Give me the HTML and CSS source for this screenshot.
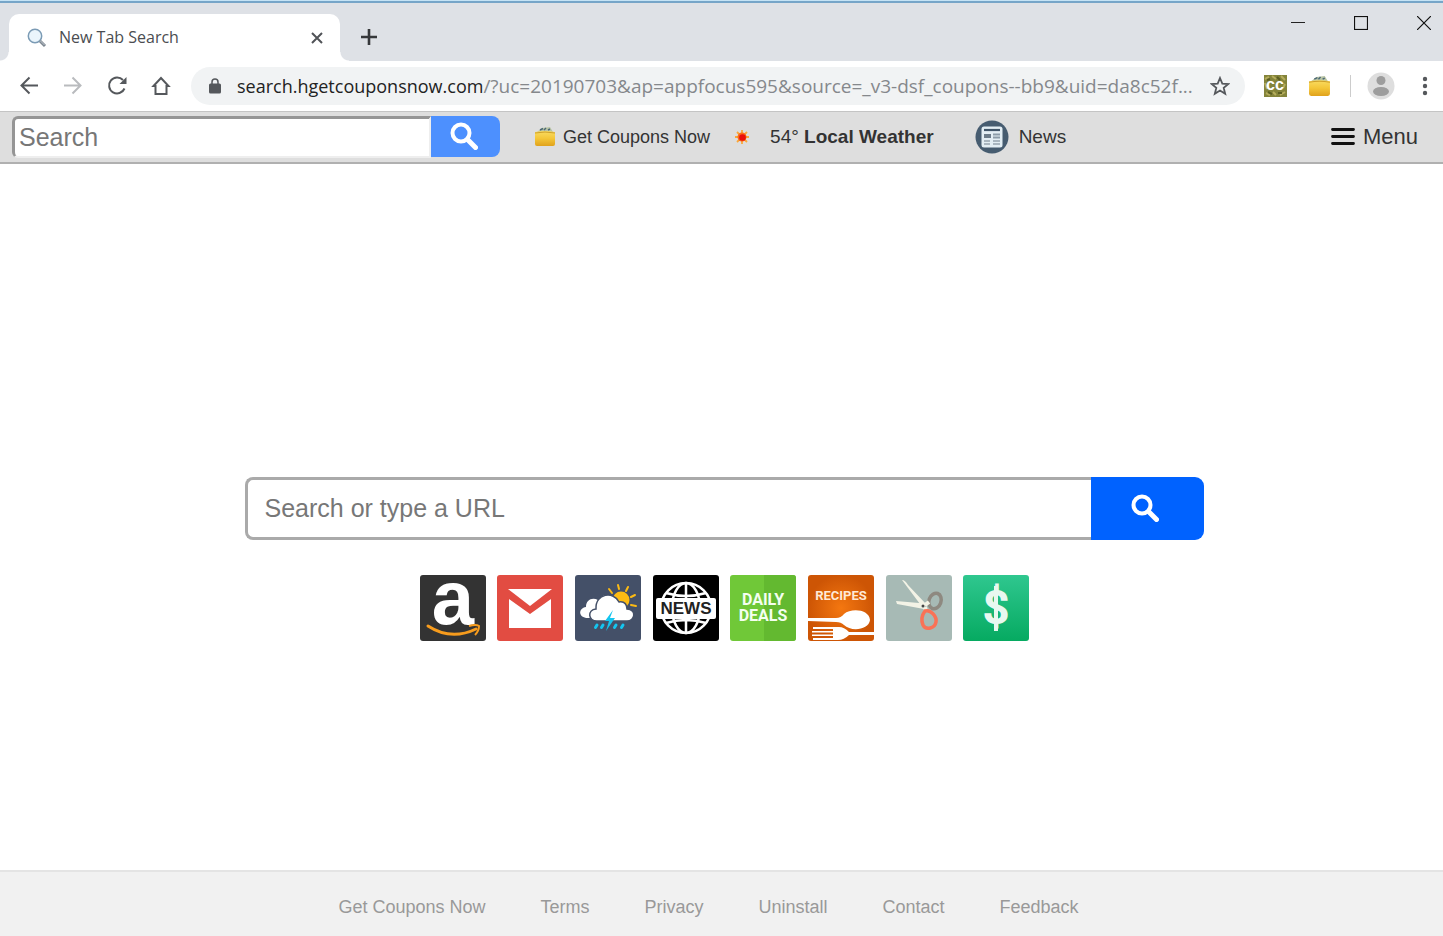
FILE: index.html
```html
<!DOCTYPE html>
<html lang="en">
  <head>
    <meta charset="UTF-8" />
    <meta name="viewport" content="width=device-width, initial-scale=1.0" />
    <title>New Tab Search</title>
    <link rel="stylesheet" href="styles.css">
  </head>
  <body>
    <svg class="defs" width="0" height="0">
      <defs>
        <linearGradient id="gold" x1="0" y1="0" x2="0" y2="1">
          <stop offset="0" stop-color="#f9dc62" />
          <stop offset="0.5" stop-color="#f4c638" />
          <stop offset="1" stop-color="#e0a21c" />
        </linearGradient>
        <symbol id="wallet" viewBox="0 0 22 22">
          <path d="M3 6 L8 2 L16 1 L19 6 Z" fill="#b9c4a5" />
          <path d="M6 4 L9 2.500 M10 4 L12 2 M14 4 L16 3" stroke="#4b6875" stroke-width="1.400" />
          <path d="M1 6 Q11 4 21 6 L21 18 Q21 20 19 20 L3 20 Q1 20 1 18 Z" fill="url(#gold)" />
          <path d="M1 7 Q11 5 21 7" fill="none" stroke="#cfa02b" />
        </symbol>
        <symbol id="glass" viewBox="0 0 28 28">
          <circle cx="11" cy="11" r="8.500" fill="none" stroke="currentColor" stroke-width="4" />
          <path d="M17.500 17.500 L25.500 25.500" stroke="currentColor" stroke-width="5" stroke-linecap="round" />
        </symbol>
      </defs>
    </svg>

    <header class="browser">
      <div class="tab-strip">
        <div class="tab">
          <svg width="20" height="20" viewBox="0 0 20 20">
            <circle cx="8" cy="8" r="6.700" fill="#eaf5fc" stroke="#7b9bb5" stroke-width="1.500" />
            <path d="M13 13 L18 18" stroke="#7d8791" stroke-width="3" />
            <path d="M13.500 13 L17.500 17" stroke="#c3cad1" stroke-width="1" />
          </svg>
          <span class="tab-title">New Tab Search</span>
          <button class="icon-btn" aria-label="Close tab">
            <svg width="12" height="12" viewBox="0 0 12 12"><path d="M1 1 L11 11 M11 1 L1 11" stroke="#505357" stroke-width="2" /></svg>
          </button>
        </div>
        <button class="icon-btn new-tab" aria-label="New tab">
          <svg width="18" height="18" viewBox="0 0 18 18"><path d="M9 1 V17 M1 9 H17" stroke="#36383b" stroke-width="2.600" /></svg>
        </button>
        <div class="window-controls">
          <button class="icon-btn" aria-label="Minimize">
            <svg width="14" height="14" viewBox="0 0 14 14"><path d="M0 6.500 H14" stroke="#222" /></svg>
          </button>
          <button class="icon-btn" aria-label="Maximize">
            <svg width="14" height="14" viewBox="0 0 14 14"><rect x="0.500" y="0.500" width="13" height="13" fill="none" stroke="#111" stroke-width="1.200" /></svg>
          </button>
          <button class="icon-btn" aria-label="Close">
            <svg width="14" height="14" viewBox="0 0 14 14"><path d="M0 0 L14 14 M14 0 L0 14" stroke="#111" stroke-width="1.200" /></svg>
          </button>
        </div>
      </div>

      <div class="nav-row">
        <nav class="nav-buttons">
          <button class="icon-btn" aria-label="Back">
            <svg width="20" height="20" viewBox="0 0 20 20"><path d="M19 9.500 H3 M10.500 1.500 L2.500 9.500 L10.500 17.500" fill="none" stroke="#55585c" stroke-width="2" /></svg>
          </button>
          <button class="icon-btn" aria-label="Forward">
            <svg width="20" height="20" viewBox="0 0 20 20"><path d="M1 9.500 H17 M9.500 1.500 L17.500 9.500 L9.500 17.500" fill="none" stroke="#b9bbbe" stroke-width="2" /></svg>
          </button>
          <button class="icon-btn" aria-label="Reload">
            <svg width="20" height="20" viewBox="0 0 20 20"><path d="M17.500 12.500 A8 8 0 1 1 16 4" fill="none" stroke="#55585c" stroke-width="2" /><path d="M19.500 1 V8 H12.500 Z" fill="#55585c" /></svg>
          </button>
          <button class="icon-btn" aria-label="Home">
            <svg width="20" height="20" viewBox="0 0 20 20"><path d="M2.500 10 L10 2 L17.500 10 H15.500 V18 H4.500 V10 Z" fill="none" stroke="#55585c" stroke-width="2" /></svg>
          </button>
        </nav>
        <div class="address">
          <svg width="12" height="16" viewBox="0 0 12 16"><rect y="5.500" width="12" height="10" rx="1.500" fill="#55585c" /><path d="M3 6 V4 A3 3 0 0 1 9 4 V6" fill="none" stroke="#55585c" stroke-width="1.500" /></svg>
          <div class="url" role="textbox" aria-label="Address"><span>search.hgetcouponsnow.com</span>/?uc=20190703&amp;ap=appfocus595&amp;source=_v3-dsf_coupons--bb9&amp;uid=da8c52f...</div>
          <button class="icon-btn" aria-label="Bookmark">
            <svg width="20" height="20" viewBox="0 0 20 20"><path d="M10 2 L12.300 7.600 L18.400 8 L13.700 11.900 L15.200 17.800 L10 14.600 L4.800 17.800 L6.300 11.900 L1.600 8 L7.700 7.600 Z" fill="none" stroke="#55585c" stroke-width="1.800" /></svg>
          </button>
        </div>
        <div class="extensions">
          <button class="icon-btn" aria-label="CC extension">
            <svg width="24" height="24" viewBox="0 0 24 24"><rect x="1" y="1" width="23" height="22" fill="#84843a" /><path d="M2 5 L6 3 M9 2 L13 5 M18 2 L22 6 M3 19 L7 21 M10 18 L13 21 M17 21 L22 18 M2 9 L4 15 M22 10 L20 14" stroke="#b5ad5d" stroke-width="2" /><path d="M4 6 L7 5 M14 3 L17 6 M5 18 L9 20 M15 19 L19 19" stroke="#5b5e22" stroke-width="2" /><text x="12" y="16" text-anchor="middle" class="cc-text">cc</text></svg>
          </button>
          <button class="icon-btn" aria-label="Get Coupons Now extension">
            <svg width="23" height="23"><use href="#wallet" /></svg>
          </button>
          <span class="divider"></span>
          <button class="icon-btn" aria-label="Profile">
            <svg width="28" height="28" viewBox="0 0 28 28"><circle cx="14" cy="14" r="13.500" fill="#dedede" /><circle cx="14" cy="8.500" r="4.500" fill="#9d9d9d" /><ellipse cx="14" cy="19.500" rx="8" ry="4.500" fill="#9d9d9d" /></svg>
          </button>
          <button class="icon-btn more" aria-label="Chrome menu">
            <svg width="6" height="20" viewBox="0 0 6 20"><g fill="#55585c"><circle cx="3" cy="3" r="2.200" /><circle cx="3" cy="10" r="2.200" /><circle cx="3" cy="17" r="2.200" /></g></svg>
          </button>
        </div>
      </div>
    </header>

    <div class="toolbar">
      <form class="bar-search">
        <input type="text" placeholder="Search" aria-label="Search">
        <button type="button" aria-label="Search"><svg width="28" height="28"><use href="#glass" /></svg></button>
      </form>
      <a class="coupons" href="#"><svg width="22" height="22"><use href="#wallet" /></svg>Get Coupons Now</a>
      <a class="weather" href="#">
        <svg width="16" height="16" viewBox="0 0 16 16"><path d="M8 1 V15 M1 8 H15 M3 3 L13 13 M13 3 L3 13" stroke="#f9a83c" stroke-width="1.800" /><circle cx="8" cy="8" r="4.500" fill="#fb6a1b" /><circle cx="8.500" cy="8.500" r="3.300" fill="#e90f0c" /></svg>
        <span>54° <b>Local Weather</b></span>
      </a>
      <a class="news" href="#">
        <svg width="34" height="34" viewBox="0 0 34 34">
          <circle cx="17" cy="17" r="16.500" fill="#465c70" />
          <rect x="6.500" y="6.500" width="21" height="21" rx="2.500" fill="#e3eef4" />
          <path d="M9 10 H25" stroke="#3f5468" stroke-width="2.200" />
          <path d="M9 14 H16 V18 H9 Z" fill="#6c7c8a" />
          <path d="M18 14.500 H25 M18 17.500 H25" stroke="#8b9ba8" stroke-width="1.800" />
          <path d="M9 21 H15 M9 24 H15 M18 21 H25 M18 24 H25" stroke="#a9b6c0" stroke-width="1.800" />
        </svg>News
      </a>
      <button class="menu-btn">
        <svg width="24" height="18" viewBox="0 0 24 18"><path d="M1.500 1.500 H22.500 M1.500 8.500 H22.500 M1.500 15.500 H22.500" stroke="#111" stroke-width="2.800" stroke-linecap="round" /></svg>Menu
      </button>
    </div>

    <main>
      <form class="main-search">
        <input type="text" placeholder="Search or type a URL" aria-label="Search or type a URL">
        <button type="button" aria-label="Search"><svg width="28" height="28"><use href="#glass" /></svg></button>
      </form>

      <div class="tiles">
        <a href="#" aria-label="Amazon">
          <svg viewBox="0 0 66 66"><rect width="66" height="66" rx="3" fill="#333" /><text x="33" y="49" text-anchor="middle" class="amazon-a">a</text><path d="M8 51 Q31 66 56 54" fill="none" stroke="#f79c1d" stroke-width="3" stroke-linecap="round" /><path d="M49 51 Q56 49 59 51 Q59 56 55 60" fill="none" stroke="#f79c1d" stroke-width="2" /></svg>
        </a>
        <a href="#" aria-label="Gmail">
          <svg viewBox="0 0 66 66"><rect width="66" height="66" rx="3" fill="#e24c42" /><path d="M11 14 H55 L33 31 Z" fill="#fff" /><path d="M12 24 L33 39 L54 24 V53 H12 Z" fill="#fff" /></svg>
        </a>
        <a href="#" aria-label="Weather">
          <svg viewBox="0 0 66 66">
            <rect width="66" height="66" rx="3" fill="#445068" />
            <circle cx="46" cy="25" r="8.500" fill="#fdbb13" />
            <path d="M34 14 L37 18 M43 10 L44 14 M53 12 L51 16 M60 20 L56 22 M61 31 L56 30" stroke="#fdbb13" stroke-width="2" stroke-linecap="round" />
            <path d="M13 43 C3 43 3 33 11 32 C11 25 17 22 23 25 L24 43 Z" fill="#fff" />
            <path d="M22 46 C13 46 12 35 21 34 C20 18 39 16 44 27 C50 26 52 30 52 34 C62 35 60 46 52 46 Z" fill="#fff" stroke="#445068" stroke-width="1.500" />
            <path d="M38 35 L30 46 H34 L31 56 L40 43 H35 Z" fill="#14c5ef" />
            <path d="M22 50 L20.500 52.500 M28 50 L26.500 52.500 M41 50 L39.500 52.500 M48 50 L46.500 52.500" stroke="#14c5ef" stroke-width="3" stroke-linecap="round" />
          </svg>
        </a>
        <a href="#" aria-label="News">
          <svg viewBox="0 0 66 66">
            <rect width="66" height="66" rx="3" fill="#000" />
            <g fill="none" stroke="#fff" stroke-width="2.500"><circle cx="33" cy="33" r="25" /><ellipse cx="33" cy="33" rx="14" ry="25" /><path d="M33 8 V58 M13 18 Q33 24 53 18 M13 48 Q33 42 53 48" /></g>
            <rect x="3" y="23" width="60" height="21" rx="2" fill="#fff" />
            <text x="33" y="39" text-anchor="middle" class="globe-text">NEWS</text>
          </svg>
        </a>
        <a href="#" aria-label="Daily Deals">
          <svg viewBox="0 0 66 66"><rect width="66" height="66" rx="3" fill="#70c838" /><path d="M34 0 H63 Q66 0 66 3 V63 Q66 66 63 66 H34 Z" fill="#63b930" /><text x="33" y="30" text-anchor="middle" class="deals-text">DAILY</text><text x="33" y="46" text-anchor="middle" class="deals-text">DEALS</text></svg>
        </a>
        <a href="#" aria-label="Recipes">
          <svg viewBox="0 0 66 66">
            <defs><radialGradient id="orange"><stop offset="0" stop-color="#f47710" /><stop offset="1" stop-color="#cd5505" /></radialGradient></defs>
            <rect width="66" height="66" rx="3" fill="url(#orange)" />
            <text x="33" y="25" text-anchor="middle" class="recipes-text">RECIPES</text>
            <path d="M0 43 L28 43 Q33 43 36 39 C43 33 61 34 62 45 C61 55 43 57 36 50 Q33 47 28 47 L0 46 Z" fill="#fff" />
            <path d="M66 57 H41 Q36 52 31 52 H5 V54 H25 V56 H4 V57.500 H25 V59.500 H4 V61 H25 V63 H5 V65 H30 Q36 65 41 60 H66 Z" fill="#fff" />
          </svg>
        </a>
        <a href="#" aria-label="Coupons">
          <svg viewBox="0 0 66 66">
            <rect width="66" height="66" rx="3" fill="#a7bab5" />
            <ellipse cx="49" cy="26" rx="6" ry="8" transform="rotate(20 49 26)" fill="none" stroke="#8e8980" stroke-width="3.500" />
            <path d="M16 5 Q19 5 22 10 L40 29 L37 33 L34 29 Z M10 26 L33 28 L40 30 L38 34 L11 29 Z" fill="#f3f3e6" />
            <path d="M39 30 L43 27 M39 32 L40 36" stroke="#f3f3e6" stroke-width="4" />
            <path d="M39 36 C45 34 51 42 50 47 C49 53 40 56 37 50 C35 45 36 40 39 36 Z" fill="none" stroke="#fa7256" stroke-width="3.500" />
            <circle cx="37" cy="31" r="1.500" fill="#454545" />
          </svg>
        </a>
        <a href="#" aria-label="Money">
          <svg viewBox="0 0 66 66">
            <defs><linearGradient id="green" x1="0" y1="0" x2="0" y2="1"><stop offset="0" stop-color="#2fc78f" /><stop offset="1" stop-color="#06aa61" /></linearGradient></defs>
            <rect width="66" height="66" rx="3" fill="url(#green)" />
            <path d="M33 11 V56" stroke="#e8f8f0" stroke-width="4" />
            <text x="33" y="49" text-anchor="middle" class="dollar">$</text>
          </svg>
        </a>
      </div>
    </main>

    <footer>
      <a href="#">Get Coupons Now</a>
      <a href="#">Terms</a>
      <a href="#">Privacy</a>
      <a href="#">Uninstall</a>
      <a href="#">Contact</a>
      <a href="#">Feedback</a>
    </footer>
  </body>
</html>
```
FILE: styles.css
```css
* {
  box-sizing: border-box;
}
body {
  margin: 0;
  min-height: 100vh;
  display: flex;
  flex-direction: column;
  background: #fff;
  font-family: "Liberation Sans", Arial, sans-serif;
  color: #333;
}
a {
  color: inherit;
  text-decoration: none;
}
svg {
  display: block;
  flex: none;
}
button {
  font-family: inherit;
  border: 0;
  padding: 0;
  background: none;
  cursor: pointer;
}
.defs {
  position: absolute;
}

/* browser frame */
.browser {
  border-top: 1px solid #c5e3f5;
  font-family: "Open Sans", "Noto Sans", sans-serif;
}
.tab-strip {
  display: flex;
  align-items: flex-start;
  height: 60px;
  padding-left: 9px;
  border-top: 2px solid #76a5c8;
  background: #dee1e6;
}
.tab {
  position: relative;
  display: flex;
  align-items: center;
  width: 331px;
  height: 47px;
  margin-top: 11px;
  padding: 0 17px 0 18px;
  background: #fff;
  border-radius: 10px 10px 0 0;
}
/* curved feet of the tab */
.tab::before,
.tab::after {
  content: "";
  position: absolute;
  bottom: 0;
  width: 9px;
  height: 9px;
}
.tab::before {
  right: 100%;
  background: radial-gradient(circle at 0 0, transparent 8px, #fff 9px);
}
.tab::after {
  left: 100%;
  background: radial-gradient(circle at 100% 0, transparent 8px, #fff 9px);
}
.tab-title {
  flex: 1;
  margin-left: 12px;
  padding-bottom: 2px;
  font-size: 16px;
  color: #4a4d51;
}
.new-tab {
  margin: 25px 0 0 20px;
}
.window-controls {
  display: flex;
  gap: 49px;
  margin: 13px 12px 0 auto;
}
.nav-row {
  display: flex;
  align-items: center;
  height: 50px;
  background: #fff;
}
.nav-buttons {
  display: flex;
  gap: 24px;
  padding: 0 20px 0 19px;
}
.address {
  flex: 1;
  min-width: 0;
  display: flex;
  align-items: center;
  height: 38px;
  padding: 0 15px 0 18px;
  border-radius: 19px;
  background: #f1f3f4;
}
.url {
  flex: 1;
  min-width: 0;
  margin: 0 8px 0 16px;
  overflow: hidden;
  white-space: nowrap;
  font-size: 19px;
  color: #85888c;
}
.url span {
  font-size: 18px;
  color: #222;
}
.extensions {
  display: flex;
  align-items: center;
  padding: 0 15px 0 18px;
}
.extensions .icon-btn + .icon-btn {
  margin-left: 21px;
}
.extensions .icon-btn.more {
  margin-left: 27px;
}
.divider {
  width: 1px;
  height: 22px;
  margin: 0 16px 0 19px;
  background: #ccc;
}
.cc-text {
  font: bold 16px "Liberation Sans", sans-serif;
  fill: #fff;
}

/* page toolbar */
.toolbar {
  display: flex;
  align-items: center;
  height: 53px;
  padding: 0 25px 0 12px;
  border-top: 1px solid #c4c4c4;
  border-bottom: 2px solid #b0b0b0;
  background: #dedede;
  font-size: 19px;
}
.toolbar a {
  display: flex;
  align-items: center;
  white-space: nowrap;
}
.bar-search {
  display: flex;
  width: 488px;
  height: 42px;
}
.bar-search input {
  flex: 1;
  min-width: 0;
  padding: 0 4px;
  border: solid;
  border-width: 3px 2px 2px 3px;
  border-color: #959595 #eee #eee #959595;
  border-radius: 6px 0 0 6px;
  font: 25px "Liberation Sans", Arial, sans-serif;
}
.bar-search button {
  display: flex;
  justify-content: center;
  width: 69px;
  height: 41px;
  padding: 6px 3px 0 0;
  border-radius: 0 8px 8px 0;
  background: #4d90fe;
  color: #fff;
}
input::placeholder {
  color: #777;
}
.toolbar .coupons {
  gap: 7px;
  margin-left: 34px;
  font-size: 18px;
}
.toolbar .weather {
  gap: 20px;
  margin-left: 24px;
}
.toolbar .news {
  gap: 10px;
  margin-left: 41px;
}
.menu-btn {
  display: flex;
  align-items: center;
  gap: 8px;
  margin-left: auto;
  font-size: 22px;
  color: #333;
}

/* search area */
main {
  flex: 1;
  display: flex;
  flex-direction: column;
  align-items: center;
  justify-content: center;
  padding: 84px 0 0 6px;
}
.main-search {
  display: flex;
  width: 66.67%;
  height: 63px;
}
.main-search input {
  flex: 1;
  min-width: 0;
  padding: 0 16px;
  border: 3px solid #aaa;
  border-right: 0;
  border-radius: 8px 0 0 8px;
  font: 25px "Liberation Sans", Arial, sans-serif;
}
.main-search button {
  display: flex;
  align-items: center;
  justify-content: center;
  width: 113px;
  padding: 0 5px 2px 0;
  border-radius: 0 9px 9px 0;
  background: #0062ff;
  color: #fff;
}
.tiles {
  display: flex;
  justify-content: space-between;
  width: 610px;
  margin-top: 35px;
}
.tiles a {
  width: 66px;
  height: 66px;
}
.tiles svg {
  overflow: visible;
}
.amazon-a {
  font: bold 76px "Liberation Sans", sans-serif;
  fill: #fff;
}
.globe-text {
  font: bold 17px "Liberation Sans", sans-serif;
  fill: #222;
}
.deals-text {
  font: bold 16px Roboto, sans-serif;
  fill: #f4fff0;
}
.recipes-text {
  font: bold 13px Roboto, sans-serif;
  fill: #ffe9d6;
}
.dollar {
  font: bold 48px Roboto, sans-serif;
  fill: #e8f8f0;
}

footer {
  display: flex;
  flex-wrap: wrap;
  justify-content: center;
  gap: 8px 55px;
  padding: 25px 26px 19px 0;
  border-top: 2px solid #e4e4e4;
  background: #f1f1f1;
  font-size: 18px;
  line-height: 20px;
  color: #999;
}
```
